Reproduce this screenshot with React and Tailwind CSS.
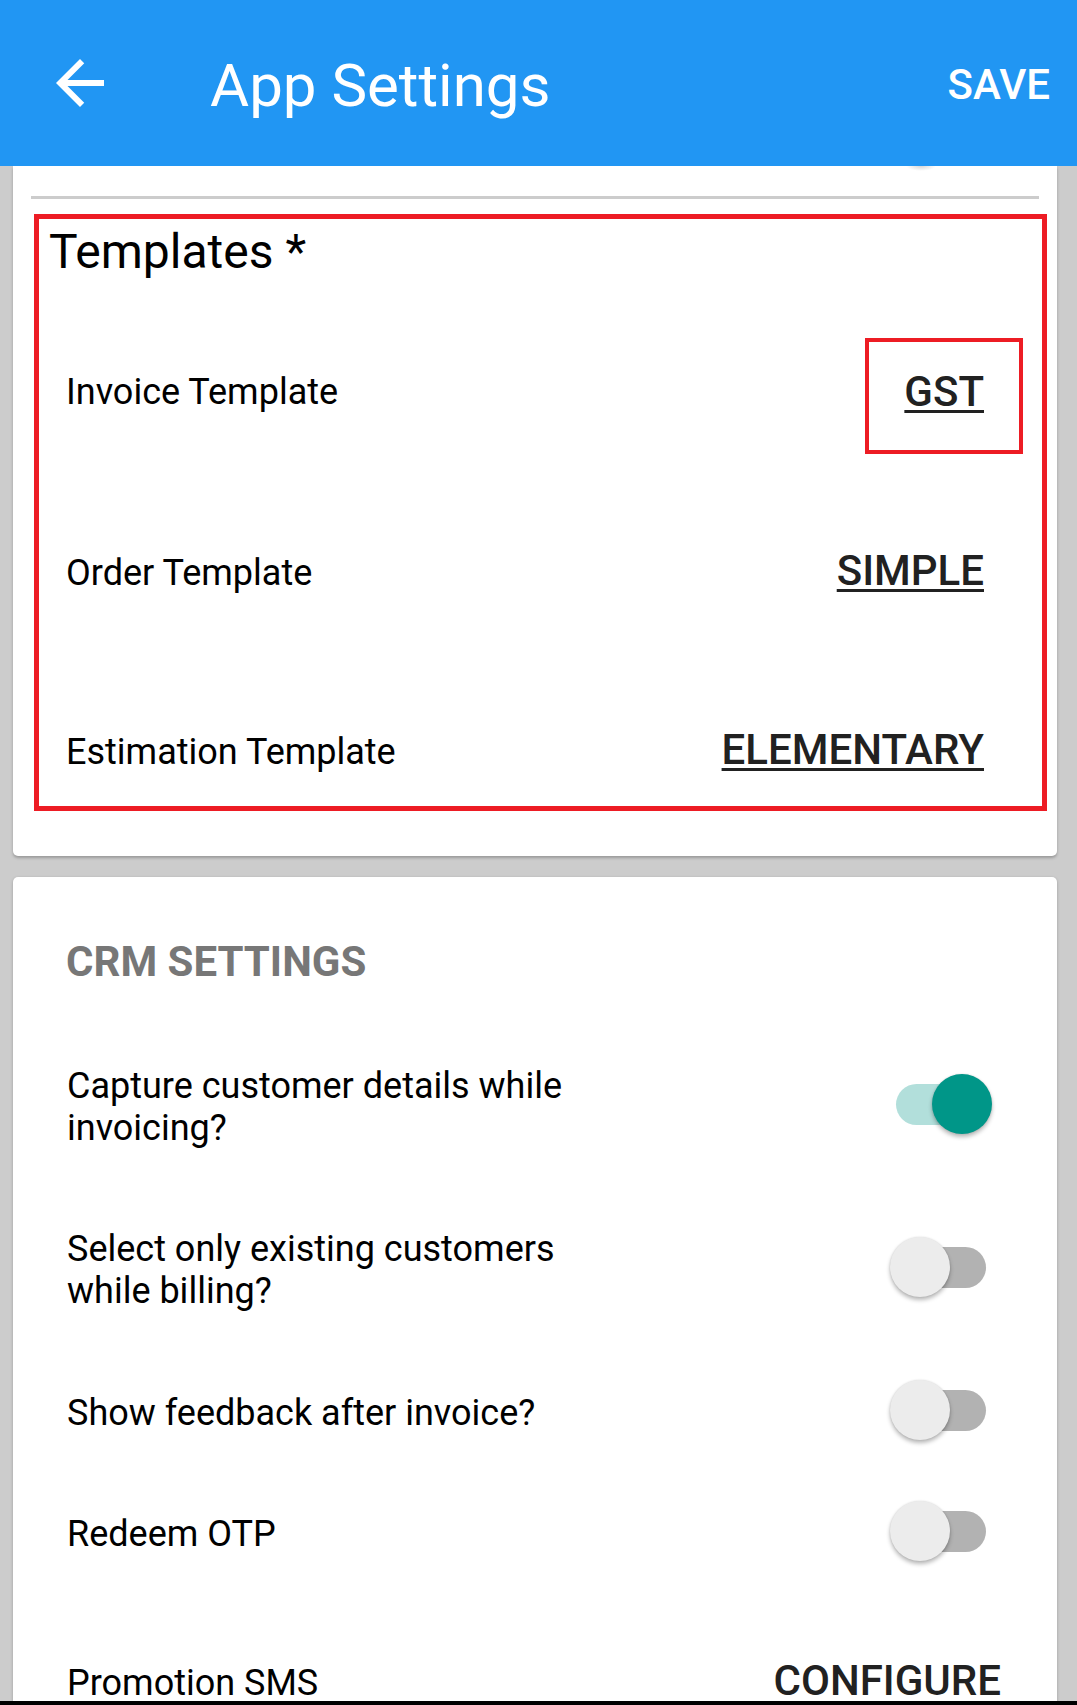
import React from "react";

function Toggle({ on }) {
  return (
    <div className="relative w-[102px] h-[60px] shrink-0 mb-[6px]">
      <div
        className={
          on
            ? "absolute left-[6px] top-[10px] w-[90px] h-[41px] rounded-full bg-[#B2DFDB]"
            : "absolute left-[6px] top-[10px] w-[90px] h-[41px] rounded-full bg-[#B2B2B2]"
        }
      />
      <div
        className={
          on
            ? "absolute top-0 left-[42px] w-[60px] h-[60px] rounded-full bg-[#009688] shadow-[0_3px_4px_rgba(0,0,0,0.28),0_0_2px_rgba(0,0,0,0.12)]"
            : "absolute top-0 left-0 w-[60px] h-[60px] rounded-full bg-[#ECECEC] shadow-[0_3px_4px_rgba(0,0,0,0.28),0_0_2px_rgba(0,0,0,0.12)]"
        }
      />
    </div>
  );
}

function ToggleRow({ label, on, mt, h }) {
  return (
    <div className={`flex items-center justify-between pl-[54px] pr-[65px] ${mt} ${h}`}>
      <div className="w-[530px] text-[36px] leading-[42px] text-black">{label}</div>
      <Toggle on={on} />
    </div>
  );
}

export default function App() {
  return (
    <div className="h-[1705px] w-[1077px] overflow-hidden flex flex-col font-['Roboto',sans-serif] bg-[#CCCCCC]">
      {/* App bar */}
      <header className="h-[166px] shrink-0 bg-[#2196F3] flex items-center pl-[44px] pr-[27px]">
        <svg width="72" height="72" viewBox="0 0 24 24" className="shrink-0">
          <path
            d="M20 11H7.83l5.59-5.59L12 4l-8 8 8 8 1.41-1.41L7.83 13H20v-2z"
            fill="#ffffff"
          />
        </svg>
        <div className="ml-[94px] mt-[5px] text-[60px] leading-[60px] text-white font-normal">
          App Settings
        </div>
        <div className="ml-auto mt-[3px] text-[42px] leading-[42px] text-white font-medium">
          SAVE
        </div>
      </header>

      {/* Content */}
      <main className="flex-1 overflow-hidden">
        {/* Card 1 */}
        <section className="ml-[13px] mr-[20px] bg-white rounded-b-[5px] shadow-[0_2px_3px_rgba(0,0,0,0.25)] pb-[45px]">
          <div className="h-[6px] flex justify-end pr-[121px]">
            <div className="w-[30px] h-[5px] bg-[radial-gradient(ellipse_at_top,rgba(0,0,0,0.16),rgba(0,0,0,0)_70%)]" />
          </div>
          <div className="mt-[24px] mx-[18px] h-[3px] bg-[#CCCCCC]" />
          <div className="mt-[15px] ml-[21px] mr-[10px] border-[5px] border-[#ED1C24] pt-[9px] pb-[35px]">
            <div className="pl-[10px] text-[48px] leading-[48px] text-black">Templates *</div>

            <div className="mt-[62px] flex items-center justify-between pl-[27px]">
              <div className="mb-[8px] text-[36px] leading-[36px] text-black">Invoice Template</div>
              <div className="mr-[19px] border-4 border-[#ED1C24] pt-[29px] pb-[37px] px-[35px]">
                <span className="text-[42px] leading-[42px] font-medium text-[#212121] underline decoration-[3px] underline-offset-[4px]">
                  GST
                </span>
              </div>
            </div>

            <div className="mt-[96px] h-[42px] flex items-baseline justify-between pl-[27px] pr-[58px]">
              <div className="text-[36px] leading-[40px] text-black">Order Template</div>
              <div className="text-[42px] leading-[42px] font-medium text-[#212121] underline decoration-[3px] underline-offset-[4px]">
                SIMPLE
              </div>
            </div>

            <div className="mt-[137px] h-[42px] flex items-baseline justify-between pl-[27px] pr-[58px]">
              <div className="text-[36px] leading-[40px] text-black">Estimation Template</div>
              <div className="text-[42px] leading-[42px] font-medium text-[#212121] underline decoration-[3px] underline-offset-[4px]">
                ELEMENTARY
              </div>
            </div>
          </div>
        </section>

        {/* Card 2 */}
        <section className="mt-[21px] ml-[13px] mr-[20px] bg-white rounded-[5px] shadow-[0_1px_3px_rgba(0,0,0,0.25)] pt-[64px] pb-[40px]">
          <div className="pl-[53px] text-[42px] leading-[42px] font-bold text-[#777777]">CRM SETTINGS</div>

          <ToggleRow label="Capture customer details while invoicing?" on={true} mt="mt-[82px]" h="" />
          <ToggleRow label="Select only existing customers while billing?" on={false} mt="mt-[79px]" h="" />
          <ToggleRow label="Show feedback after invoice?" on={false} mt="mt-[71px]" h="h-[60px]" />
          <ToggleRow label="Redeem OTP" on={false} mt="mt-[61px]" h="h-[60px]" />

          <div className="mt-[96px] h-[42px] flex items-baseline justify-between pl-[54px] pr-[56px]">
            <div className="text-[36px] leading-[40px] text-black">Promotion SMS</div>
            <div className="text-[42px] leading-[42px] font-medium text-[#212121]">CONFIGURE</div>
          </div>
        </section>
      </main>

      <div className="h-[4px] shrink-0 bg-black" />
    </div>
  );
}
